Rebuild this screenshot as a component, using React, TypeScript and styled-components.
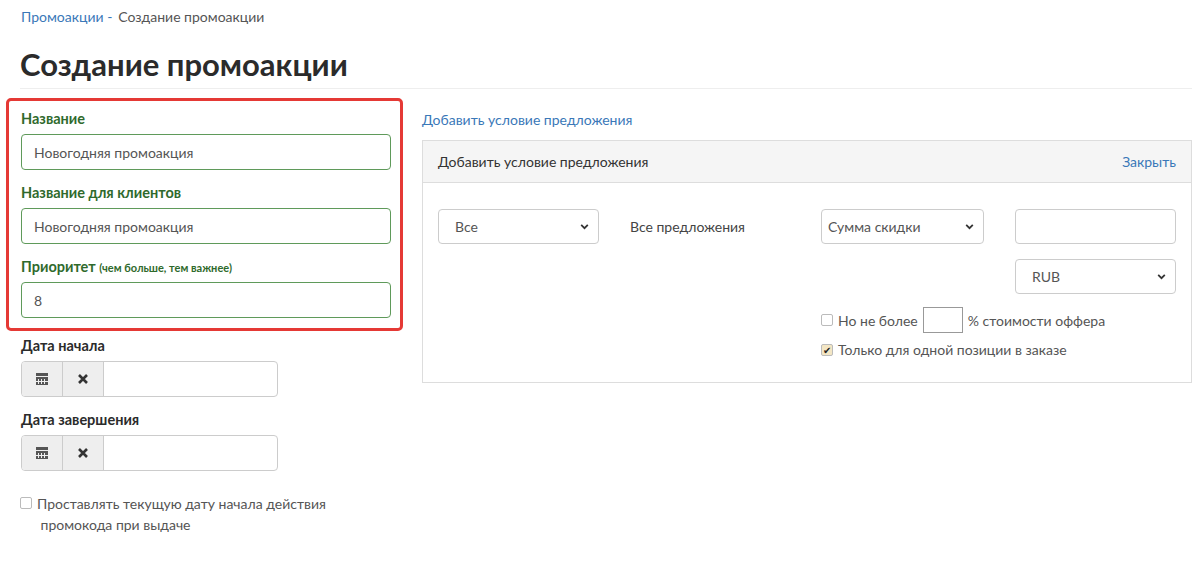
import styled, { createGlobalStyle } from 'styled-components'

const Global = createGlobalStyle`
  body { margin: 0; background: #fff; font-family: Lato, "Open Sans", sans-serif; color: #333; }
  * { box-sizing: border-box; }
`

const Page = styled.div`
  padding: 8px 8px 0 20px;
`

const Crumbs = styled.div`
  font-size: 14px;
  color: #555;
  padding-left: 1px;
  a { color: #3a78b8; text-decoration: none; margin-right: 6px; }
`

const Title = styled.h1`
  margin: 20px 0 0;
  font-size: 31px;
  font-weight: 700;
  color: #2b2b2b;
  padding-bottom: 5px;
  border-bottom: 1px solid #eee;
`

const Columns = styled.div`
  display: grid;
  grid-template-columns: 402px 770px;
  margin-top: 9px;
`

const Highlight = styled.div`
  margin-left: -14px;
  width: 397px;
  border: 3px solid #e53935;
  border-radius: 5px;
  padding: 9px 10px 10px 12px;
  display: flex;
  flex-direction: column;
  gap: 14px;
`

const Field = styled.div`
  display: flex;
  flex-direction: column;
  gap: 7px;
`

const Label = styled.label<{ green?: boolean }>`
  font-size: 14.5px;
  font-weight: 700;
  color: ${(p) => (p.green ? '#2f6a2c' : '#2b2b2b')};
  small { font-size: 11px; }
`

const Input = styled.div<{ green?: boolean }>`
  height: 36px;
  width: ${(p) => (p.green ? '370px' : '100%')};
  border: 1px solid ${(p) => (p.green ? '#5f9a5a' : '#ccc')};
  border-radius: 4px;
  padding: 0 12px;
  display: flex;
  align-items: center;
  font-size: 14px;
  color: #555;
`

const Plain = styled.div`
  padding: 6px 0 0 1px;
  display: flex;
  flex-direction: column;
  gap: 14px;
`

const Group = styled.div`
  display: flex;
  width: 257px;
  height: 36px;
  border: 1px solid #ccc;
  border-radius: 4px;
  overflow: hidden;
`

const Addon = styled.div`
  width: 41px;
  background: #eee;
  border-right: 1px solid #ccc;
  display: flex;
  align-items: center;
  justify-content: center;
  color: #444;
`

const Check = styled.span<{ on?: boolean }>`
  display: inline-flex;
  width: 12px;
  height: 12px;
  border: 1px solid #bbb;
  border-radius: 2px;
  background: ${(p) => (p.on ? '#f3e6c4' : '#fff')};
  align-items: center;
  justify-content: center;
  font-size: 10px;
  line-height: 1;
  color: #222;
  flex: none;
`

const CheckRow = styled.div`
  display: flex;
  gap: 5px;
  font-size: 14px;
  color: #555;
  line-height: 21px;
  margin-top: 22px;
  span:first-child { margin-top: 4px; }
  div { width: 300px; }
`

const Right = styled.div`
  padding-top: 11px;
`

const Link = styled.a`
  color: #3a78b8;
  font-size: 14px;
`

const Panel = styled.div`
  margin-top: 12px;
  border: 1px solid #ddd;
  height: 243px;
`

const PanelHead = styled.div`
  height: 42px;
  background: #f5f5f5;
  border-bottom: 1px solid #ddd;
  display: flex;
  align-items: center;
  justify-content: space-between;
  padding: 0 15px;
  font-size: 14px;
  color: #333;
`

const PanelBody = styled.div`
  display: grid;
  grid-template-columns: 161px 160px 163px 161px;
  column-gap: 31px;
  padding: 26px 15px 0;
  row-gap: 15px;
  align-items: center;
`

const Select = styled.div<{ tight?: boolean }>`
  height: 35px;
  border: 1px solid #ccc;
  border-radius: 4px;
  display: flex;
  align-items: center;
  justify-content: space-between;
  padding: 0 8px 0 ${(p) => (p.tight ? '6px' : '16px')};
  font-size: 14px;
  color: #555;
`

const Text = styled.div`
  font-size: 14px;
  color: #444;
`

const Options = styled.div`
  grid-column: 3 / 5;
  display: flex;
  flex-direction: column;
  gap: 8px;
  margin-top: -2px;
`

const OptRow = styled.div`
  display: flex;
  align-items: center;
  gap: 5px;
  font-size: 14px;
  color: #555;
`

const Tiny = styled.span`
  width: 40px;
  height: 26px;
  border: 1px solid #999;
  display: inline-block;
`

const Chevron = () => (
  <svg width="11" height="11" viewBox="0 0 10 10"><path d="M2 3.5 L5 6.5 L8 3.5" stroke="#333" strokeWidth="1.6" fill="none" /></svg>
)

const Calendar = () => (
  <svg width="14" height="14" viewBox="0 0 14 14" fill="#555">
    <rect x="1" y="1" width="12" height="3" />
    <rect x="1" y="5" width="12" height="8" />
    <g fill="#eee">
      <rect x="3" y="7" width="1" height="5" /><rect x="6" y="7" width="1" height="5" /><rect x="9" y="7" width="1" height="5" />
      <rect x="1" y="9" width="12" height="1" />
    </g>
  </svg>
)

const Cross = () => (
  <svg width="12" height="12" viewBox="0 0 12 12"><path d="M2 2 L10 10 M10 2 L2 10" stroke="#333" strokeWidth="2.6" /></svg>
)

function DateField({ label }: { label: string }) {
  return (
    <Field>
      <Label>{label}</Label>
      <Group>
        <Addon><Calendar /></Addon>
        <Addon><Cross /></Addon>
      </Group>
    </Field>
  )
}

export default function App() {
  return (
    <Page>
      <Global />
      <Crumbs><a>Промоакции -</a>Создание промоакции</Crumbs>
      <Title>Создание промоакции</Title>
      <Columns>
        <div>
          <Highlight>
            <Field>
              <Label green>Название</Label>
              <Input green>Новогодняя промоакция</Input>
            </Field>
            <Field>
              <Label green>Название для клиентов</Label>
              <Input green>Новогодняя промоакция</Input>
            </Field>
            <Field>
              <Label green>Приоритет <small>(чем больше, тем важнее)</small></Label>
              <Input green>8</Input>
            </Field>
          </Highlight>
          <Plain>
            <DateField label="Дата начала" />
            <DateField label="Дата завершения" />
          </Plain>
          <CheckRow>
            <Check />
            <div>Проставлять текущую дату начала действия<br />&nbsp;промокода при выдаче</div>
          </CheckRow>
        </div>
        <Right>
          <Link>Добавить условие предложения</Link>
          <Panel>
            <PanelHead>
              <span>Добавить условие предложения</span>
              <Link>Закрыть</Link>
            </PanelHead>
            <PanelBody>
              <Select>Все<Chevron /></Select>
              <Text>Все предложения</Text>
              <Select tight>Сумма скидки<Chevron /></Select>
              <Select />
              <div /><div /><div />
              <Select>RUB<Chevron /></Select>
              <div /><div />
              <Options>
                <OptRow><Check />Но не более<Tiny />% стоимости оффера</OptRow>
                <OptRow><Check on>✔</Check>Только для одной позиции в заказе</OptRow>
              </Options>
            </PanelBody>
          </Panel>
        </Right>
      </Columns>
    </Page>
  )
}
